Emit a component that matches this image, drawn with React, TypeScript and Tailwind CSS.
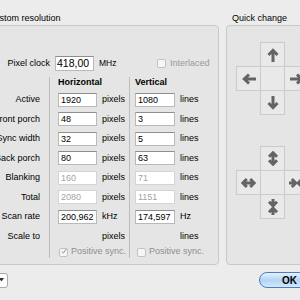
import React from "react";

const ARROW = "#646464";

function Up() {
  return (
    <svg width="12" height="14" viewBox="0 0 12 14">
      <path d="M6 14V3M1.5 7L6 2.3L10.5 7" stroke={ARROW} strokeWidth="3" fill="none" />
    </svg>
  );
}
function Down() {
  return (
    <svg width="12" height="14" viewBox="0 0 12 14">
      <path d="M6 0V11M1.5 7L6 11.7L10.5 7" stroke={ARROW} strokeWidth="3" fill="none" />
    </svg>
  );
}
function Left() {
  return (
    <svg width="14" height="12" viewBox="0 0 14 12">
      <path d="M14 6H3M7 1.5L2.3 6L7 10.5" stroke={ARROW} strokeWidth="3" fill="none" />
    </svg>
  );
}
function Right() {
  return (
    <svg width="14" height="12" viewBox="0 0 14 12">
      <path d="M0 6H11M7 1.5L11.7 6L7 10.5" stroke={ARROW} strokeWidth="3" fill="none" />
    </svg>
  );
}
function VExpand() {
  return (
    <svg width="12" height="15" viewBox="0 0 12 15">
      <path d="M6 3V12M2 5.8L6 1.8L10 5.8M2 9.2L6 13.2L10 9.2" stroke={ARROW} strokeWidth="3" fill="none" />
    </svg>
  );
}
function HExpand() {
  return (
    <svg width="15" height="12" viewBox="0 0 15 12">
      <path d="M3 6H12M5.8 2L1.8 6L5.8 10M9.2 2L13.2 6L9.2 10" stroke={ARROW} strokeWidth="3" fill="none" />
    </svg>
  );
}
function HShrink() {
  return (
    <svg width="16" height="12" viewBox="0 0 16 12">
      <path d="M0 6H6M2.8 2L6.8 6L2.8 10M16 6H10M13.2 2L9.2 6L13.2 10" stroke={ARROW} strokeWidth="3" fill="none" />
    </svg>
  );
}
function VShrink() {
  return (
    <svg width="12" height="16" viewBox="0 0 12 16">
      <path d="M6 0V6M2 2.8L6 6.8L10 2.8M6 16V10M2 13.2L6 9.2L10 13.2" stroke={ARROW} strokeWidth="3" fill="none" />
    </svg>
  );
}

function Cell({ children }: { children?: React.ReactNode }) {
  return (
    <div className="w-[25px] h-[25px] border border-[#cbcbcb] bg-[#e9e9e9] flex items-center justify-center">
      {children}
    </div>
  );
}

function Field({ value, disabled, w }: { value: string; disabled?: boolean; w: string }) {
  return (
    <div
      className={`${w} h-[14px] bg-white border pl-[2px] text-[9px] leading-[12px] ${
        disabled ? "border-[#d4d4d4] text-[#a3a3a3]" : "border-[#b9b9b9] border-t-[#8e8e8e] text-black"
      }`}
    >
      {value}
    </div>
  );
}

function Check({ checked }: { checked?: boolean }) {
  return (
    <div className="w-[9px] h-[9px] rounded-[2px] border border-[#c2c2c2] bg-[#f6f6f6] flex items-center justify-center">
      {checked && (
        <svg width="9" height="9" viewBox="0 0 9 9" className="-mt-[2px] ml-[1px]">
          <path d="M1.5 4.5L3.5 7L8 0.5" stroke="#8a8a8a" strokeWidth="1.4" fill="none" />
        </svg>
      )}
    </div>
  );
}

const rows = [
  { label: "Active", h: "1920", v: "1080", hu: "pixels", vu: "lines" },
  { label: "Front porch", h: "48", v: "3", hu: "pixels", vu: "lines" },
  { label: "Sync width", h: "32", v: "5", hu: "pixels", vu: "lines" },
  { label: "Back porch", h: "80", v: "63", hu: "pixels", vu: "lines" },
  { label: "Blanking", h: "160", v: "71", hu: "pixels", vu: "lines", dis: true },
  { label: "Total", h: "2080", v: "1151", hu: "pixels", vu: "lines", dis: true },
  { label: "Scan rate", h: "200,962", v: "174,597", hu: "kHz", vu: "Hz" },
];

export default function App() {
  return (
    <div className="w-[300px] h-[300px] overflow-hidden bg-[#ececec] font-['Liberation_Sans',Arial,sans-serif] text-[9px] text-black">
      <div className="flex pt-[12px]">
        {/* Left group */}
        <div className="w-[225px] -ml-[6px] shrink-0 flex flex-col">
          <div className="h-[13px] leading-[13px] -ml-[6px] whitespace-nowrap">Custom resolution</div>
          <div className="h-[240px] border border-[#c9c9c9] rounded-[4px] bg-[#e5e5e5] pt-[30px]">
            <div className="flex items-center h-[15px]">
              <div className="w-[55px] text-right whitespace-nowrap">Pixel clock</div>
              <div className="ml-[5px] w-[39px] h-[15px] bg-white border border-[#b9b9b9] border-t-[#8e8e8e] text-[10.5px] leading-[13px] pl-[1px] text-black">
                418,00
              </div>
              <div className="ml-[5px] w-[58px] text-[8.5px]">MHz</div>
              <Check />
              <div className="ml-[4px] text-[#9a9a9a]">Interlaced</div>
            </div>
            <div className="flex mt-[6px]">
              <div className="w-[54px] pr-[9px] flex flex-col items-end">
                <div className="h-[13px]" />
                {rows.map((r) => (
                  <div key={r.label} className="h-[19.5px] flex items-center whitespace-nowrap">
                    {r.label}
                  </div>
                ))}
                <div className="h-[19.5px] flex items-center whitespace-nowrap">Scale to</div>
              </div>
              <div className="w-[80px] border-l border-[#bdbdbd] pl-[8px] flex flex-col">
                <div className="h-[13px] leading-[11px] font-bold">Horizontal</div>
                {rows.map((r) => (
                  <div key={r.label} className="h-[19.5px] flex items-center">
                    <Field value={r.h} disabled={r.dis} w="w-[39px]" />
                    <div className="ml-[5px]">{r.hu}</div>
                  </div>
                ))}
                <div className="h-[19.5px] flex items-center pl-[44px]">pixels</div>
                <div className="h-[12px] flex items-center pl-[1px]">
                  <Check checked />
                  <div className="ml-[3px] text-[#8e8e8e] whitespace-nowrap">Positive sync.</div>
                </div>
              </div>
              <div className="flex-1 border-l border-[#bdbdbd] pl-[5px] flex flex-col">
                <div className="h-[13px] leading-[11px] font-bold">Vertical</div>
                {rows.map((r) => (
                  <div key={r.label} className="h-[19.5px] flex items-center">
                    <Field value={r.v} disabled={r.dis} w="w-[40px]" />
                    <div className="ml-[5px]">{r.vu}</div>
                  </div>
                ))}
                <div className="h-[19.5px] flex items-center pl-[45px]">lines</div>
                <div className="h-[12px] flex items-center pl-[2px]">
                  <Check />
                  <div className="ml-[3px] text-[#8e8e8e] whitespace-nowrap">Positive sync.</div>
                </div>
              </div>
            </div>
          </div>
        </div>
        {/* Right group */}
        <div className="ml-[7px] w-[100px] shrink-0 flex flex-col">
          <div className="h-[13px] leading-[13px] pl-[6px] whitespace-nowrap">Quick change</div>
          <div className="h-[240px] border border-[#c9c9c9] rounded-[4px] bg-[#e5e5e5] pt-[16px] pl-[9px]">
            <div className="grid grid-cols-[24px_24px_24px] grid-rows-[24px_24px_24px]">
              <div />
              <Cell><Up /></Cell>
              <div />
              <Cell><Left /></Cell>
              <Cell />
              <Cell><Right /></Cell>
              <div />
              <Cell><Down /></Cell>
              <div />
            </div>
            <div className="grid grid-cols-[24px_24px_24px] grid-rows-[24px_24px_24px] mt-[32px]">
              <div />
              <Cell><VExpand /></Cell>
              <div />
              <Cell><HExpand /></Cell>
              <Cell />
              <Cell><HShrink /></Cell>
              <div />
              <Cell><VShrink /></Cell>
              <div />
            </div>
          </div>
        </div>
      </div>
      {/* Bottom buttons */}
      <div className="flex items-center justify-between mt-[7px] h-[16px]">
        <div className="-ml-[10px] w-[18px] h-[15px] bg-white border border-[#a9a9a9] rounded-[3px] flex items-center justify-end pr-[3px]">
          <svg width="5" height="4" viewBox="0 0 5 4">
            <path d="M0 0H5L2.5 3.5Z" fill="#333" />
          </svg>
        </div>
        <div className="-mr-[16px] w-[57px] h-[16px] rounded-full border border-[#4d7cc2] bg-linear-to-b from-[#e6f2fd] via-[#b3d4f4] to-[#d3e8fb] flex items-center pl-[22px] text-[10px] font-bold text-black">
          OK
        </div>
      </div>
    </div>
  );
}
